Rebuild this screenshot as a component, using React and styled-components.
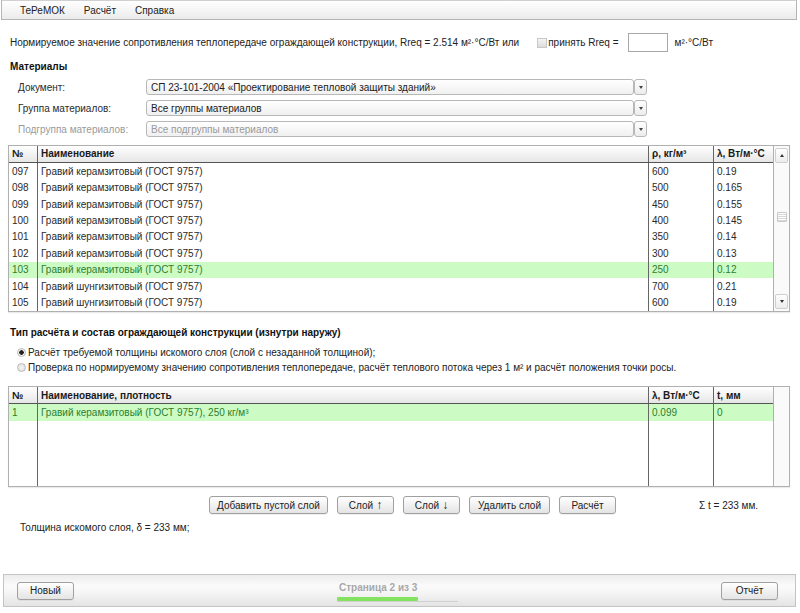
import React from "react";
import styled, {createGlobalStyle, css} from "styled-components";

const GlobalStyle = createGlobalStyle`
  html, body {
    margin: 0;
    padding: 0;
    background: #fff;
  }
  body {
    font-family: "Liberation Sans", Arial, sans-serif;
    font-size: 10px;
    color: #222;
  }
`;

const Page = styled.div`
  width: 800px;
  height: 613px;
  display: flex;
  flex-direction: column;
  overflow: hidden;
`;

const MenuBar = styled.div`
  height: 18px;
  margin: 0 3px 0 1px;
  border: 1px solid #b4b4b4;
  border-top-color: #d0d0d0;
  background: linear-gradient(#ffffff, #ebebeb);
  display: flex;
  align-items: center;
  gap: 19px;
  padding-left: 18px;
  color: #222;
`;

const RreqRow = styled.div`
  margin-top: 13px;
  height: 19px;
  padding-left: 10px;
  display: flex;
  align-items: center;
`;

const CheckBox = styled.span`
  width: 8px;
  height: 8px;
  border: 1px solid #c8c8c8;
  background: linear-gradient(#f4f4f4, #dcdcdc);
  margin: 0 1px 0 18px;
`;

const NumInput = styled.div`
  width: 38px;
  height: 17px;
  border: 1px solid #a8a8a8;
  background: #fff;
  margin: 0 7px 0 9px;
`;

const Title = styled.div`
  margin-top: ${p => p.mt}px;
  padding-left: 10px;
  height: 13px;
  line-height: 13px;
  font-weight: bold;
  color: #111;
`;

const Form = styled.div`
  margin-top: 6px;
  display: flex;
  flex-direction: column;
  gap: 5px;
`;

const FormRow = styled.div`
  display: flex;
  align-items: center;
  height: 16px;
  padding-left: 18px;
`;

const Label = styled.div`
  width: 128px;
  color: ${p => (p.disabled ? "#9a9a9a" : "#2a2a2a")};
`;

const SelectBox = styled.div`
  width: 482px;
  height: 14px;
  border: 1px solid #b8b8b8;
  border-radius: 3px;
  background: linear-gradient(#ffffff, #f0f0f0);
  display: flex;
  align-items: center;
  padding-left: 4px;
  color: ${p => (p.disabled ? "#9a9a9a" : "#222")};
`;

const DropBtn = styled.div`
  width: 11px;
  height: 14px;
  border: 1px solid #b8b8b8;
  border-radius: 3px;
  background: linear-gradient(#ffffff, #ececec);
  display: flex;
  align-items: center;
  justify-content: center;
  &::after {
    content: "";
    border-left: 2px solid transparent;
    border-right: 2px solid transparent;
    border-top: 3px solid #444;
  }
`;

const Table = styled.div`
  margin: ${p => p.mt}px 0 0 8px;
  width: 780px;
  height: ${p => p.h}px;
  border: 1px solid #b0b0b0;
  display: flex;
  box-shadow: 0 1px 1px rgba(0, 0, 0, 0.08);
`;

const TableMain = styled.div`
  flex: 1;
  display: flex;
  flex-direction: column;
`;

const cols = "28px 611px 65px 60px";

const HeadRow = styled.div`
  display: grid;
  grid-template-columns: ${cols};
  height: 16px;
  border-bottom: 1px solid #555;
  background: linear-gradient(#ffffff, #e6e6e6);
  font-weight: bold;
  color: #1a1a1a;
`;

const Row = styled.div`
  display: grid;
  grid-template-columns: ${cols};
  height: ${p => p.h || 16.5}px;
  color: #2a2a2a;
  ${p => p.selected && css`
    background: #ccfcc4;
    color: #2e7d2e;
  `}
  ${p => p.fill && css`
    flex: 1;
  `}
`;

const Cell = styled.div`
  display: flex;
  align-items: center;
  padding-left: 3px;
  overflow: hidden;
  white-space: nowrap;
  & + & {
    border-left: 1px solid ${p => (p.head ? "#9a9a9a" : "#666")};
  }
`;

const Gutter = styled.div`
  width: 15px;
  border-left: 1px solid #b0b0b0;
  background: #fafafa;
  display: flex;
  flex-direction: column;
`;

const ScrollBtn = styled.div`
  height: 13px;
  margin: 2px 1px;
  border: 1px solid #cfcfcf;
  border-radius: 2px;
  background: linear-gradient(#ffffff, #ececec);
  display: flex;
  align-items: center;
  justify-content: center;
  &::after {
    content: "";
    border-left: 2px solid transparent;
    border-right: 2px solid transparent;
    ${p => p.up
      ? css`border-bottom: 3px solid #333;`
      : css`border-top: 3px solid #333;`}
  }
`;

const Track = styled.div`
  flex: 1;
  padding-top: 47px;
  display: flex;
  justify-content: center;
`;

const Thumb = styled.div`
  width: 8px;
  height: 8px;
  border: 1px solid #c8c8c8;
  border-radius: 1px;
  background: repeating-linear-gradient(#fff 0 1px, #d8d8d8 1px 2px);
`;

const RadioGroup = styled.div`
  margin-top: 6px;
`;

const RadioRow = styled.div`
  height: 15px;
  padding-left: 17px;
  display: flex;
  align-items: center;
  color: #222;
`;

const Radio = styled.span`
  width: 9px;
  height: 9px;
  border: 1px solid #b8b8b8;
  border-radius: 50%;
  background: radial-gradient(circle, ${p => (p.checked ? "#222 0 2px, #f2f2f2 2.5px" : "#f4f4f4 0, #dedede 100%")});
  margin-right: 2px;
  box-sizing: border-box;
`;

const ActionRow = styled.div`
  margin-top: 9px;
  height: 18px;
  padding-left: 209px;
  display: flex;
  align-items: center;
  gap: 9px;
`;

const Button = styled.button`
  width: ${p => p.w}px;
  height: 18px;
  padding: 0;
  border: 1px solid #a0a0a0;
  border-radius: 3px;
  background: linear-gradient(#ffffff, #e4e4e4);
  box-shadow: 0 1px 0 rgba(0, 0, 0, 0.06);
  font-family: "Liberation Sans", Arial, sans-serif;
  font-size: 10px;
  color: #222;
`;

const Arrow = styled.span`
  font-size: 12px;
  margin-left: 3px;
`;

const Sum = styled.div`
  margin-left: 74px;
  color: #222;
`;

const Result = styled.div`
  margin-top: 7px;
  padding-left: 20px;
  height: 13px;
  line-height: 13px;
`;

const Footer = styled.div`
  margin: 40px 4px 0 3px;
  height: 31px;
  border: 1px solid #c4c4c4;
  background: linear-gradient(#ececec, #fbfbfb 35%, #f4f4f4 60%, #e4e4e4);
  display: flex;
  align-items: center;
  justify-content: space-between;
  padding: 0 17px 0 13px;
`;

const PageInfo = styled.div`
  width: 121px;
  display: flex;
  flex-direction: column;
  padding-top: 2px;
`;

const PageText = styled.div`
  padding-left: 2px;
  font-weight: bold;
  color: #a8a8a8;
  height: 13px;
  line-height: 13px;
`;

const Progress = styled.div`
  margin-top: 4px;
  height: 3px;
  border-bottom: 1px solid #cfcfcf;
  display: flex;
  align-items: flex-end;
`;

const ProgressFill = styled.div`
  height: 4px;
  background: #84e35e;
  border-radius: 1px;
`;

const materials = [
    ["097", "Гравий керамзитовый (ГОСТ 9757)", "600", "0.19"],
    ["098", "Гравий керамзитовый (ГОСТ 9757)", "500", "0.165"],
    ["099", "Гравий керамзитовый (ГОСТ 9757)", "450", "0.155"],
    ["100", "Гравий керамзитовый (ГОСТ 9757)", "400", "0.145"],
    ["101", "Гравий керамзитовый (ГОСТ 9757)", "350", "0.14"],
    ["102", "Гравий керамзитовый (ГОСТ 9757)", "300", "0.13"],
    ["103", "Гравий керамзитовый (ГОСТ 9757)", "250", "0.12"],
    ["104", "Гравий шунгизитовый (ГОСТ 9757)", "700", "0.21"],
    ["105", "Гравий шунгизитовый (ГОСТ 9757)", "600", "0.19"]
];

export default function App() {
    return (
        <Page>
            <GlobalStyle/>
            <MenuBar>
                <span>ТеРеМОК</span>
                <span>Расчёт</span>
                <span>Справка</span>
            </MenuBar>

            <RreqRow>
                <span>Нормируемое значение сопротивления теплопередаче ограждающей конструкции, Rreq = 2.514 м²·°С/Вт или</span>
                <CheckBox/>
                <span>принять Rreq =</span>
                <NumInput/>
                <span>м²·°С/Вт</span>
            </RreqRow>

            <Title mt={8}>Материалы</Title>
            <Form>
                <FormRow>
                    <Label>Документ:</Label>
                    <SelectBox>СП 23-101-2004 «Проектирование тепловой защиты зданий»</SelectBox>
                    <DropBtn/>
                </FormRow>
                <FormRow>
                    <Label>Группа материалов:</Label>
                    <SelectBox>Все группы материалов</SelectBox>
                    <DropBtn/>
                </FormRow>
                <FormRow>
                    <Label disabled>Подгруппа материалов:</Label>
                    <SelectBox disabled>Все подгруппы материалов</SelectBox>
                    <DropBtn/>
                </FormRow>
            </Form>

            <Table mt={8} h={165}>
                <TableMain>
                    <HeadRow>
                        <Cell head>№</Cell>
                        <Cell head>Наименование</Cell>
                        <Cell head>ρ, кг/м³</Cell>
                        <Cell head>λ, Вт/м·°С</Cell>
                    </HeadRow>
                    {materials.map(([n, name, rho, lambda]) => (
                        <Row key={n} selected={n === "103"}>
                            <Cell>{n}</Cell>
                            <Cell>{name}</Cell>
                            <Cell>{rho}</Cell>
                            <Cell>{lambda}</Cell>
                        </Row>
                    ))}
                </TableMain>
                <Gutter>
                    <ScrollBtn up/>
                    <Track><Thumb/></Track>
                    <ScrollBtn/>
                </Gutter>
            </Table>

            <Title mt={14}>Тип расчёта и состав ограждающей конструкции (изнутри наружу)</Title>
            <RadioGroup>
                <RadioRow><Radio checked/>Расчёт требуемой толщины искомого слоя (слой с незаданной толщиной);</RadioRow>
                <RadioRow><Radio/>Проверка по нормируемому значению сопротивления теплопередаче, расчёт теплового потока через 1 м² и расчёт положения точки росы.</RadioRow>
            </RadioGroup>

            <Table mt={11} h={99}>
                <TableMain>
                    <HeadRow>
                        <Cell head>№</Cell>
                        <Cell head>Наименование, плотность</Cell>
                        <Cell head>λ, Вт/м·°С</Cell>
                        <Cell head>t, мм</Cell>
                    </HeadRow>
                    <Row selected h={17}>
                        <Cell>1</Cell>
                        <Cell>Гравий керамзитовый (ГОСТ 9757), 250 кг/м³</Cell>
                        <Cell>0.099</Cell>
                        <Cell>0</Cell>
                    </Row>
                    <Row fill>
                        <Cell/>
                        <Cell/>
                        <Cell/>
                        <Cell/>
                    </Row>
                </TableMain>
                <Gutter/>
            </Table>

            <ActionRow>
                <Button w={119}>Добавить пустой слой</Button>
                <Button w={57}>Слой<Arrow>↑</Arrow></Button>
                <Button w={57}>Слой<Arrow>↓</Arrow></Button>
                <Button w={81}>Удалить слой</Button>
                <Button w={57}>Расчёт</Button>
                <Sum>Σ t = 233 мм.</Sum>
            </ActionRow>

            <Result>Толщина искомого слоя, δ = 233 мм;</Result>

            <Footer>
                <Button w={57}>Новый</Button>
                <PageInfo>
                    <PageText>Страница 2 из 3</PageText>
                    <Progress>
                        <ProgressFill style={{width: `${(2 / 3) * 100}%`}}/>
                    </Progress>
                </PageInfo>
                <Button w={57}>Отчёт</Button>
            </Footer>
        </Page>
    );
}
